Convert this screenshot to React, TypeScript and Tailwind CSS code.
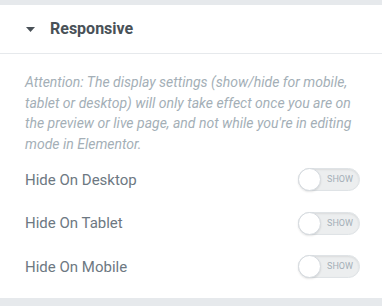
const rows = ["Hide On Desktop", "Hide On Tablet", "Hide On Mobile"];

function Toggle() {
  return (
    <div className="relative h-[23px] w-[62px] rounded-full border border-[#dfe3e6] bg-[#eceeef] shadow-[inset_0_1px_2px_rgba(0,0,0,0.08)]">
      <div className="absolute left-[-1px] top-[-1px] h-[23px] w-[23px] rounded-full border border-[#d5dadf] bg-white shadow-[0_1px_2px_rgba(0,0,0,0.1)]" />
      <span className="absolute right-[6px] top-[5px] text-[9px] leading-[11px] text-[#a4afb7]">SHOW</span>
    </div>
  );
}

export default function App() {
  return (
    <div
      className="h-[306px] w-[382px] bg-[#e6e9ec] pt-[5px] pb-[8px]"
      style={{ fontFamily: "Roboto, Arial, sans-serif" }}
    >
      <div className="h-[293px] bg-white">
        <div className="flex h-[49px] items-center border-b border-[#e6e9ec] pl-[26px]">
          <svg width="9" height="5" viewBox="0 0 9 5" className="mr-[15px]">
            <path d="M0 0h9L4.5 5z" fill="#495157" />
          </svg>
          <span className="text-[16px] font-bold text-[#495157]">Responsive</span>
        </div>
        <div className="pl-[25px] pr-[22px] pt-[18px]">
          <p className="text-[14px] italic leading-[20.5px] text-[#a4afb7]">
            Attention: The display settings (show/hide for mobile, tablet or desktop) will only take effect once you are on the preview or live page, and not while you're in editing mode in Elementor.
          </p>
          <div className="mt-[4px] flex flex-col">
            {rows.map((r) => (
              <div key={r} className="flex h-[43.5px] items-center justify-between">
                <span className="text-[15px] text-[#6d7882]">{r}</span>
                <Toggle />
              </div>
            ))}
          </div>
        </div>
      </div>
    </div>
  );
}
